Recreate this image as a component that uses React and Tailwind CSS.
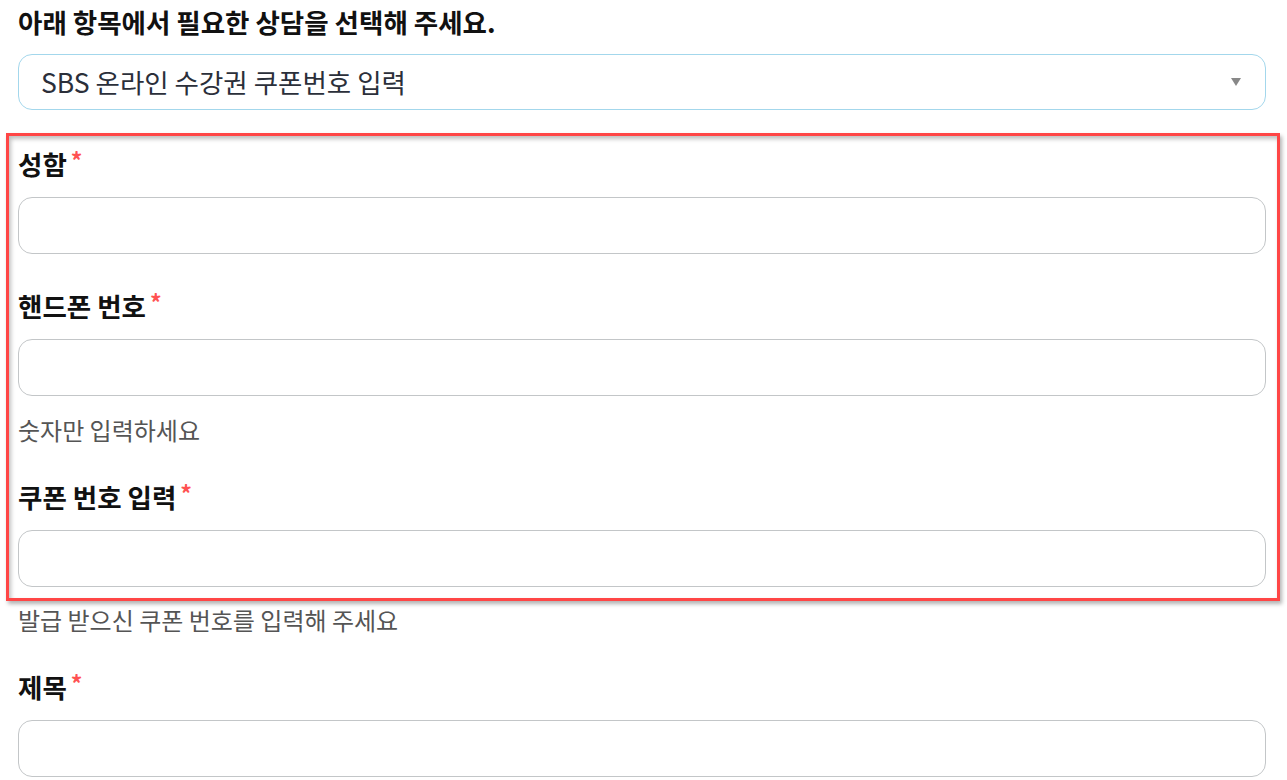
import React from 'react';

const FONT = "font-['Noto_Sans_CJK_KR','Noto_Sans',sans-serif]";

const FIELDS = [
  { label: '성함', mt: 'mt-[38px]' },
  { label: '핸드폰 번호', mt: 'mt-[36px]', help: '숫자만 입력하세요', helpMt: 'mt-[19px]' },
  { label: '쿠폰 번호 입력', mt: 'mt-[36px]', help: '발급 받으신 쿠폰 번호를 입력해 주세요', helpMt: 'mt-[18px]' },
  { label: '제목', mt: 'mt-[36px]' },
];

const Field = ({ label, mt, help, helpMt }) => (
  <div className={mt}>
    <div className="flex items-start h-[32px] leading-[32px] text-[26.5px] font-bold text-[#111]">
      {label}
      <span className="ml-[4px] text-[23px] leading-[24px] text-[#ff5252]">*</span>
    </div>
    <input
      type="text"
      className="mt-[17px] block w-full h-[57px] rounded-[14px] border border-[#c3c6c8] bg-white px-5 outline-none"
    />
    {help && (
      <p className={`${helpMt} h-[30px] leading-[30px] text-[24px] text-[#555]`}>{help}</p>
    )}
  </div>
);

export default function App() {
  return (
    <div className={`relative min-h-screen bg-white pl-[18px] pr-[21px] ${FONT}`}>
      <h2 className="pt-[6px] h-[38px] leading-[32px] text-[26.5px] font-bold text-[#111]">
        아래 항목에서 필요한 상담을 선택해 주세요.
      </h2>

      <div className="mt-[16px] flex items-center justify-between h-[56px] rounded-[14px] border border-[#a3d7ec] pl-[22px] pr-[24px]">
        <span className="text-[26.5px] text-[#2b2f3a]">SBS 온라인 수강권 쿠폰번호 입력</span>
        <svg width="10" height="8" viewBox="0 0 10 8">
          <path d="M0 0 H10 L5 8 Z" fill="#888" />
        </svg>
      </div>

      {FIELDS.map((f) => (
        <Field key={f.label} {...f} />
      ))}

      {/* annotation box over the required fields */}
      <div className="pointer-events-none absolute left-[6px] top-[133px] w-[1274px] h-[468px] border-[3px] border-[#ff4646] shadow-[2px_3px_4px_rgba(0,0,0,0.3),inset_2px_3px_4px_rgba(0,0,0,0.25)]" />
    </div>
  );
}
